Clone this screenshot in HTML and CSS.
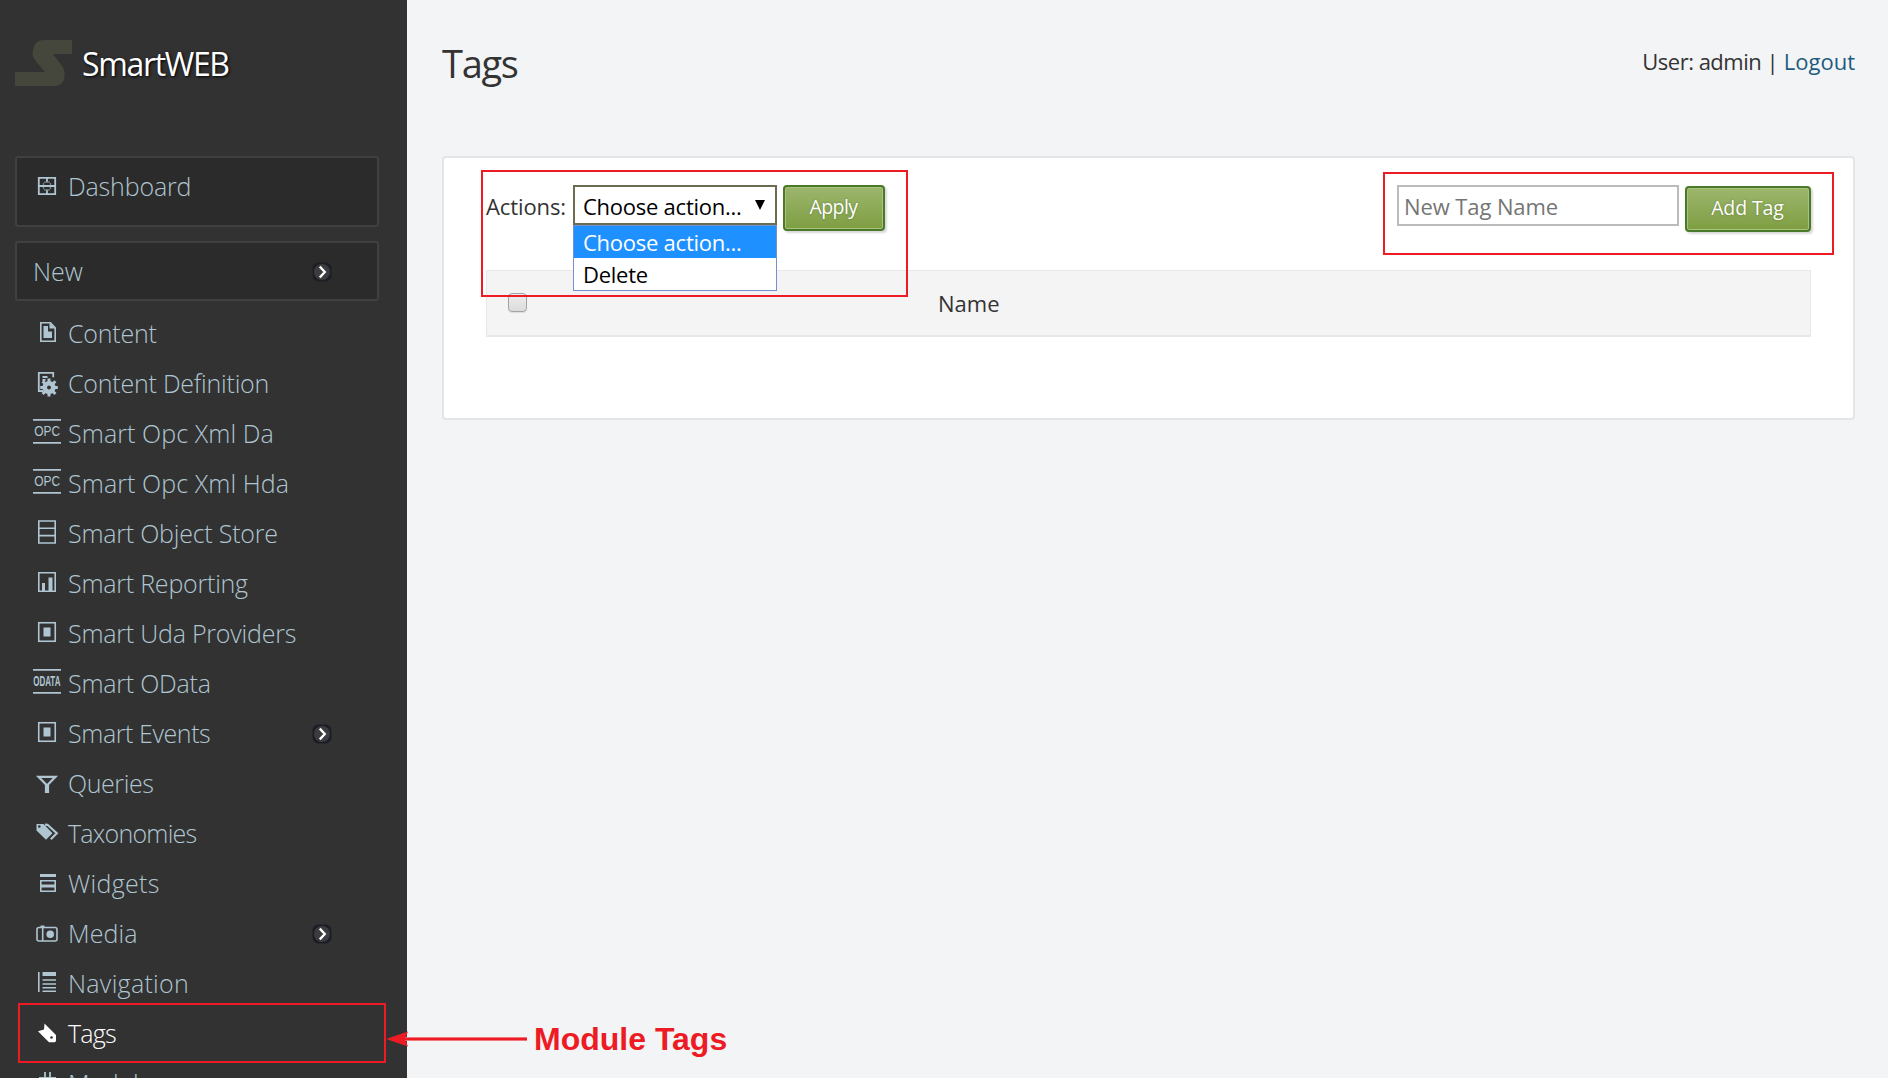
FILE: index.html
```
<!DOCTYPE html>
<html lang="en">
<head>
<meta charset="utf-8">
<title>Tags - SmartWEB</title>
<link rel="stylesheet" href="styles.css">
</head>
<body>
<svg class="defs" aria-hidden="true">
  <symbol id="i-chevron" viewBox="0 0 20 20">
    <rect x="0.5" y="0.5" width="19" height="19" rx="6" fill="#1d1e25"/>
    <circle cx="10" cy="10" r="8" fill="#3b3c40"/>
    <path d="M7.8 4.6 L12.8 10 L7.8 15.4" fill="none" stroke="#fff" stroke-width="2.3"/>
  </symbol>
  <symbol id="i-event" viewBox="0 0 28 50">
    <rect x="5.75" y="14.75" width="16.5" height="18.5" fill="none" stroke="currentColor" stroke-width="1.6"/>
    <rect x="10.5" y="19.5" width="7" height="9" fill="currentColor"/>
  </symbol>
  <symbol id="i-opc" viewBox="0 0 28 50">
    <path d="M0 11.8h28M0 34.8h28" stroke="currentColor" stroke-width="1.8"/>
    <text x="1.2" y="23" transform="scale(1 1.22)" class="glyph-text">OPC</text>
  </symbol>
</svg>

<div class="app">
  <aside class="sidebar">
    <div class="brand">
      <svg class="logo" viewBox="0 0 57 46"><path d="M57 0V14H38L47 26Q49.500 29 49.500 33V37Q48 46 39 46H0V32H30L20 20Q16 15 18.500 8Q21 0 29 0Z" fill="#46473c"/></svg>
      <span class="brand-name">SmartWEB</span>
    </div>
    <nav>
      <a class="box box-dashboard">
        <svg class="icon" viewBox="0 0 28 50"><path d="M5.800 16.800h16.400v16.400H5.800zM5.800 25h5M17.200 25h5M14 16.800v4M14 29.200v4M10.800 25h6.400" fill="none" stroke="currentColor" stroke-width="1.800"/><path d="M11 21.200h6M11 28.800h6M10.500 22v6M17.500 22v6" stroke="currentColor" stroke-width="1.300" opacity=".6"/></svg>
        <span>Dashboard</span>
      </a>
      <a class="box box-new"><span>New</span><svg class="chevron"><use href="#i-chevron"/></svg></a>
      <ul class="menu">
        <li><svg class="icon" viewBox="0 0 28 50"><path d="M7.800 14.800h9.700l4.700 5v13.400H7.800z" fill="none" stroke="currentColor" stroke-width="1.600"/><path d="M10.500 18h4.500v5.500h4v6.500h-8.500zM16.500 14.500l6 6h-6z" fill="currentColor"/></svg><span>Content</span></li>
        <li><svg class="icon" viewBox="0 0 28 50"><path d="M10 33H5.800V14.800h14.400v4.500M9.500 19h5M9.500 22h3" fill="none" stroke="currentColor" stroke-width="1.800"/><circle cx="16" cy="29.500" r="4.600" fill="none" stroke="currentColor" stroke-width="4"/><path d="M16 20.500v18M7.200 29.500h17.600M9.600 23.200l12.800 12.800M22.400 23.200L9.600 36" stroke="currentColor" stroke-width="3"/><circle cx="16" cy="29.500" r="1.900" fill="#323232"/></svg><span>Content Definition</span></li>
        <li class="wide"><svg class="icon"><use href="#i-opc"/></svg><span>Smart Opc Xml Da</span></li>
        <li class="wide"><svg class="icon"><use href="#i-opc"/></svg><span>Smart Opc Xml Hda</span></li>
        <li><svg class="icon" viewBox="0 0 28 50"><path d="M5.800 13h16.400v22H5.800zM5.800 20.300h16.400M5.800 27.600h16.400" fill="none" stroke="currentColor" stroke-width="1.600"/></svg><span>Smart Object Store</span></li>
        <li><svg class="icon" viewBox="0 0 28 50"><path d="M5.800 14.800h16.400v18.400H5.800z" fill="none" stroke="currentColor" stroke-width="1.600"/><path d="M9 25h3v9H9zM15.500 19.500h4V34h-4z" fill="currentColor"/></svg><span>Smart Reporting</span></li>
        <li><svg class="icon"><use href="#i-event"/></svg><span>Smart Uda Providers</span></li>
        <li><svg class="icon" viewBox="0 0 28 50"><path d="M0 11.800h28M0 34.800h28" stroke="currentColor" stroke-width="1.800"/><text x="0.200" y="14.600" transform="scale(1 1.930)" class="glyph-text glyph-small">ODATA</text></svg><span>Smart OData</span></li>
        <li class="narrow"><svg class="icon"><use href="#i-event"/></svg><span>Smart Events</span><svg class="chevron"><use href="#i-chevron"/></svg></li>
        <li class="narrow"><svg class="icon" viewBox="0 0 28 50"><path d="M5.500 18.800h17L15 26.500V34h-2v-7.500z" fill="none" stroke="currentColor" stroke-width="2.200"/></svg><span>Queries</span></li>
        <li class="t-kern"><svg class="icon" viewBox="0 0 28 50"><path d="M3.500 16h7l9 9.300-6.500 6.500L3.500 22.500z" fill="currentColor"/><circle cx="6.300" cy="18.500" r="1.300" fill="#323232"/><path d="M12 16.600l2.500.2 9.300 8.500-6 6" fill="none" stroke="currentColor" stroke-width="2.200"/></svg><span>Taxonomies</span></li>
        <li class="wider"><svg class="icon" viewBox="0 0 28 50"><path d="M7 16h16v3H7zM7 26.500h16v3H7z" fill="currentColor"/><path d="M7.800 22.800h14.400v10.400H7.800z" fill="none" stroke="currentColor" stroke-width="1.600"/></svg><span>Widgets</span></li>
        <li class="wide"><svg class="icon" viewBox="0 0 28 50"><rect x="4" y="19.500" width="20" height="13.500" rx="2" fill="none" stroke="currentColor" stroke-width="1.600"/><path d="M9.700 19v14" stroke="currentColor" stroke-width="1.600"/><path d="M7.500 17.500h4V20h-4z" fill="currentColor"/><circle cx="17.200" cy="26.200" r="3.800" fill="currentColor"/></svg><span>Media</span><svg class="chevron"><use href="#i-chevron"/></svg></li>
        <li class="wider"><svg class="icon" viewBox="0 0 28 50"><path d="M5.800 14v20M9.500 22h13.500M9.500 26h13.500M9.500 29.700h13.500M9.500 33.300h13.500" stroke="currentColor" stroke-width="1.600"/><path d="M9.500 14H23v4H9.500z" fill="currentColor"/></svg><span>Navigation</span></li>
        <li class="active t-kern"><svg class="icon" viewBox="0 0 28 50"><path d="M11.500 15.500L23 27V32.500Q23 34 21.500 34.200H16L5 23.300 11 21.500z" fill="currentColor"/><circle cx="18.500" cy="29.500" r="1.300" fill="#323232"/></svg><span>Tags</span></li>
        <li><svg class="icon" viewBox="0 0 28 50"><path d="M12 14v20M17 14v20M6 20h17M6 27h17" stroke="currentColor" stroke-width="1.800"/></svg><span>Modules</span></li>
      </ul>
    </nav>
  </aside>

  <main class="main">
    <header class="header">
      <h1>Tags</h1>
      <div class="user"><span class="user-name">User: admin |</span> <a>Logout</a></div>
    </header>
    <section class="panel">
      <div class="toolbar">
        <div class="actions">
          <label>Actions:</label>
          <div class="select">
            <span>Choose action...</span><i class="arrow"></i>
            <div class="options">
              <div class="option selected">Choose action...</div>
              <div class="option">Delete</div>
            </div>
          </div>
          <button class="btn btn-apply">Apply</button>
        </div>
        <div class="add">
          <input type="text" placeholder="New Tag Name">
          <button class="btn btn-add">Add Tag</button>
        </div>
      </div>
      <div class="table-head"><span class="check"></span><span>Name</span></div>
    </section>
  </main>
</div>

<div class="mark mark-actions"></div>
<div class="mark mark-add"></div>
<div class="mark mark-tags"></div>
<div class="callout">
  <svg viewBox="0 0 142 18"><path d="M18 9H141" stroke="#f4777c" stroke-width="4"/><path d="M18 9H141" stroke="#ed1c24" stroke-width="2.200"/><path d="M0 9L22 1.500L19 9L22 16.500Z" fill="#ed1c24"/></svg>
  <span>Module Tags</span>
</div>
</body>
</html>
```
FILE: styles.css
```
* { box-sizing: border-box; }
body {
  margin: 0;
  height: 100vh;
  overflow: hidden;
  position: relative;
  background: #f3f4f6;
  color: #333;
  font-family: "Open Sans", "Noto Sans", sans-serif;
  font-size: 22px;
}
.defs { position: absolute; width: 0; height: 0; }
.app { display: flex; height: 100vh; }

/* Sidebar */
.sidebar {
  width: 407px;
  flex: none;
  height: 100vh;
  overflow: hidden;
  background: #323232;
  color: #afc5d1;
  font-size: 25px;
  font-weight: 300;
  letter-spacing: -0.22px;
  line-height: 50px;
  padding: 40px 28px 0 15px;
}
.brand { display: flex; height: 116px; color: #fff; }
.logo { width: 57px; height: 46px; flex: none; }
.brand-name {
  margin: -1px 0 0 10px;
  font-size: 32px;
  font-weight: 400;
  letter-spacing: -1.35px;
  text-shadow: 1px 1px 3px #000;
}
.box {
  display: flex;
  border: 2px solid #404042;
  border-radius: 3px;
  background: #2b2b2b;
  padding-left: 16px;
  margin-bottom: 14px;
}
.box-dashboard { height: 71px; padding-top: 3px; letter-spacing: -0.15px; }
.box-new { height: 60px; margin-bottom: 7px; padding-top: 3px; letter-spacing: 0; }
.box-new .chevron { margin-right: 45px; margin-top: 16px; }
.box > span { white-space: nowrap; }
.icon { width: 28px; height: 50px; flex: none; margin-right: 7px; }
.glyph-text { font: 400 12px "Liberation Sans", sans-serif; letter-spacing: 0; fill: currentColor; }
.glyph-small { font-size: 8px; font-weight: 700; }
.chevron { width: 20px; height: 20px; flex: none; margin: 16px 47px 0 auto; }
.menu { list-style: none; margin: 0; padding: 0 0 0 18px; }
.menu li { display: flex; height: 50px; white-space: nowrap; }
.menu .narrow { letter-spacing: -0.42px; }
.menu .wide { letter-spacing: 0.08px; }
.menu .wider { letter-spacing: 0.3px; }
.menu .t-kern { letter-spacing: -0.75px; }
.menu .active { color: #fff; }

/* Main area */
.main { flex: 1; padding: 0 33px 0 35px; }
.header { display: flex; justify-content: space-between; height: 156px; }
h1 { margin: 38px 0 0; font-size: 38px; font-weight: 400; line-height: 50px; letter-spacing: -1.3px; }
.user { margin-top: 41px; line-height: 40px; white-space: nowrap; }
.user-name { letter-spacing: -0.5px; }
.user a { color: #1e5b7e; }
.panel {
  height: 264px;
  border: 2px solid #e4e5e7;
  border-radius: 4px;
  background: #fff;
  padding: 27px 42px 0;
}
.toolbar { display: flex; justify-content: space-between; height: 85px; }
.actions, .add { display: flex; align-items: flex-start; }
label { width: 87px; line-height: 43px; letter-spacing: -0.1px; }
.select {
  position: relative;
  width: 204px;
  height: 40px;
  border: 2px solid #6b6d52;
  background: #fff;
  color: #000;
  display: flex;
  letter-spacing: -0.25px;
  line-height: 39px;
  padding-left: 8px;
  margin-right: 6px;
}
.arrow { margin: 13px 10px 0 auto; width: 0; height: 0; border: 5px solid transparent; border-top: 10px solid #000; border-bottom: 0; }
.options {
  position: absolute;
  z-index: 2;
  top: 38px;
  left: -2px;
  width: 204px;
  border: 1px solid #7391cf;
  background: #fff;
  line-height: 32px;
}
.option { height: 32px; padding-left: 9px; }
.option.selected { background: #1e90ff; color: #fff; }
.btn {
  height: 46px;
  border: 2px solid #4a7a29;
  border-radius: 4px;
  background: linear-gradient(#9cb66d, #7e9e42);
  box-shadow: inset 0 0 0 1px #a9c27d, 2px 2px 2px rgba(0, 0, 0, .15);
  color: #fff;
  font: 400 19.5px/40px "Open Sans", sans-serif;
  text-shadow: 0 0 2px rgba(60, 80, 20, .5);
  padding: 0 1px 2px 0;
}
.btn-apply { width: 102px; letter-spacing: -0.6px; }
.btn-add { width: 126px; margin-top: 1px; letter-spacing: -0.1px; }
input {
  width: 282px;
  height: 41px;
  border: 2px solid #bbb;
  padding: 1px 0 0 5px;
  margin-right: 6px;
  font: 400 22px "Open Sans", sans-serif;
  letter-spacing: -0.1px;
}
input::placeholder { color: #757575; }
.table-head {
  display: grid;
  grid-template-columns: 451px 1fr;
  height: 67px;
  border: 1px solid #e8e8e8;
  border-bottom-width: 2px;
  background: #f4f4f4;
  line-height: 65px;
}
.check {
  width: 19px;
  height: 19px;
  margin: 22px 0 0 21px;
  border: 1.5px solid #a3a3a3;
  border-radius: 4px;
  background: linear-gradient(#ededed, #dcdcdc);
  box-shadow: 0 1px 1px #ddd;
}

/* Annotations over the page */
.mark { position: absolute; z-index: 3; border: 2px solid #ed1c24; }
.mark-actions { left: 481px; top: 170px; width: 427px; height: 127px; }
.mark-add { left: 1383px; top: 172px; width: 451px; height: 83px; }
.mark-tags { left: 18px; top: 1003px; width: 368px; height: 60px; }
.callout {
  position: absolute;
  z-index: 3;
  left: 386px;
  top: 1019px;
  display: flex;
  align-items: center;
  color: #ed1c24;
  font: 700 32px/40px "Liberation Sans", sans-serif;
}
.callout svg { width: 142px; height: 18px; margin-right: 6px; }
```
